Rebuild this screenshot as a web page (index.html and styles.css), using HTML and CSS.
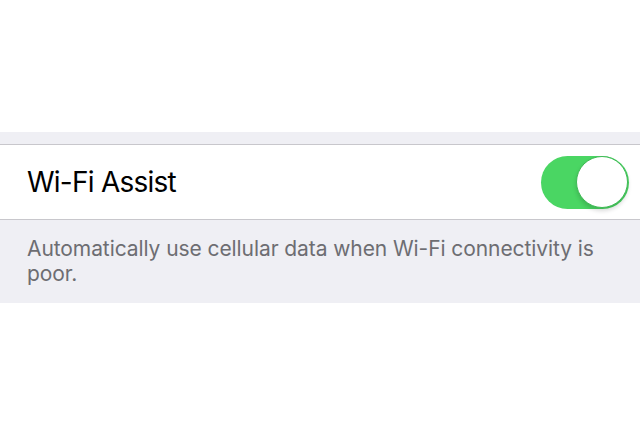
FILE: index.html
```html
<!DOCTYPE html>
<html>
<head>
<meta charset="utf-8">
<link rel="stylesheet" href="styles.css">
</head>
<body>
<div class="page">
  <div class="top"></div>
  <div class="band"></div>
  <div class="row">
    <span class="label">Wi-Fi Assist</span>
    <div class="toggle"><div class="knob"></div></div>
  </div>
  <div class="footer">Automatically use cellular data when Wi-Fi connectivity is poor.</div>
</div>
</body>
</html>
```
FILE: styles.css
```css
html, body {
  margin: 0;
  padding: 0;
  background: #ffffff;
}
.page {
  width: 640px;
  height: 436px;
  display: flex;
  flex-direction: column;
  font-family: Inter, "Liberation Sans", sans-serif;
}
.top {
  height: 132px;
  background: #ffffff;
}
.band {
  height: 12px;
  background: #efeff4;
  border-bottom: 1px solid #c8c7cc;
}
.row {
  height: 74px;
  background: #ffffff;
  border-bottom: 1px solid #c8c7cc;
  display: flex;
  align-items: center;
  justify-content: space-between;
  padding: 0 11px 0 27px;
}
.label {
  font-size: 28px;
  color: #000000;
  letter-spacing: -0.75px;
}
.toggle {
  width: 88px;
  height: 53px;
  border-radius: 27px;
  background: #4ad663;
  display: flex;
  align-items: center;
  justify-content: flex-end;
  padding-right: 1px;
  box-sizing: border-box;
}
.knob {
  width: 50px;
  height: 50px;
  border-radius: 50%;
  background: #ffffff;
  border: 1px solid #3fba55;
  box-shadow: 0 3px 4px rgba(0,0,0,0.15);
}
.footer {
  height: 83px;
  box-sizing: border-box;
  background: #efeff4;
  padding: 16px 30px 0 27px;
  font-size: 21px;
  line-height: 25px;
  letter-spacing: -0.08px;
  color: #6d6d72;
}
```
